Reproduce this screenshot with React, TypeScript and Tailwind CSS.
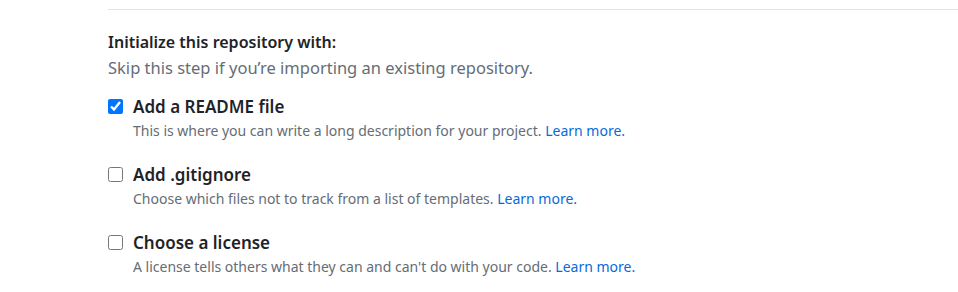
const options = [
  {
    title: "Add a README file",
    copy: "This is where you can write a long description for your project.",
    checked: true,
  },
  {
    title: "Add .gitignore",
    copy: "Choose which files not to track from a list of templates.",
    checked: false,
  },
  {
    title: "Choose a license",
    copy: "A license tells others what they can and can't do with your code.",
    checked: false,
  },
];

export default function App() {
  return (
    <div
      className="w-[958px] h-[292px] bg-white pl-[108px] pt-[9px] overflow-hidden"
      style={{ fontFamily: '"Noto Sans", "Open Sans", sans-serif' }}
    >
      <div className="border-t border-[#e1e4e8]" />

      {/* Section header */}
      <div className="pt-[20px]">
        <h3 className="text-[16px] leading-[24px] font-semibold text-[#1f2328]">
          Initialize this repository with:
        </h3>
        <p className="text-[16.5px] leading-[28px] text-[#656d76]">
          Skip this step if you’re importing an existing repository.
        </p>
      </div>

      {/* Checkbox options */}
      <div className="mt-[13px] flex flex-col gap-[20px]">
        {options.map((o) => (
          <label key={o.title} className="flex items-start gap-[10px]">
            <input
              type="checkbox"
              defaultChecked={o.checked}
              className="mt-[4px] w-[15px] h-[15px] m-0 accent-[#0075ff] shrink-0"
            />
            <div>
              <div className="text-[17px] leading-[24px] font-semibold text-[#1f2328]">
                {o.title}
              </div>
              <div className="text-[14px] leading-[24px] text-[#656d76]">
                {o.copy}{" "}
                <a href="#" className="text-[#0969da]">
                  Learn more.
                </a>
              </div>
            </div>
          </label>
        ))}
      </div>
    </div>
  );
}
